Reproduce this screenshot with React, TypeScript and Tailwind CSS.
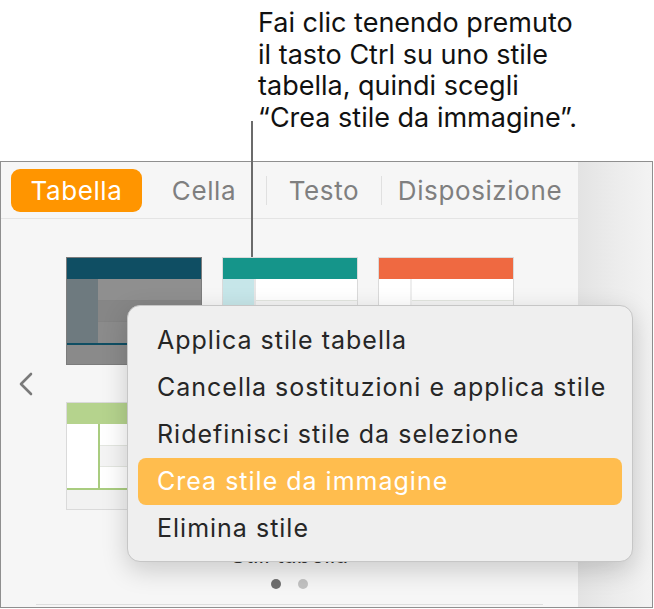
const font = { fontFamily: 'Inter, "Noto Sans", sans-serif' }

const menuItems = [
  'Applica stile tabella',
  'Cancella sostituzioni e applica stile',
  'Ridefinisci stile da selezione',
  'Crea stile da immagine',
  'Elimina stile',
]

function DarkThumb() {
  return (
    <div className="w-[136px] h-[108px] border border-[#7c7c7c] bg-[#8a8a8a] flex flex-col">
      <div className="h-[21px] bg-[#0f4e63]" />
      <div className="flex h-[64px]">
        <div className="w-[31px] bg-[#6e7a7f]" />
        <div className="flex-1 flex flex-col">
          <div className="flex-1 bg-[#8f8f8f] border-b border-[#858585]" />
          <div className="flex-1 bg-[#868686] border-b border-[#838383]" />
          <div className="flex-1 bg-[#8b8b8b]" />
        </div>
      </div>
      <div className="h-[2px] bg-[#0f4e63]" />
      <div className="flex-1 bg-[#8a8a8a]" />
    </div>
  )
}

function LightThumb({ head, col, line }: { head: string; col: string; line: string }) {
  return (
    <div className="w-[136px] h-[108px] border border-[#dadada] bg-white flex flex-col">
      <div className={`h-[21px] ${head}`} />
      <div className="flex h-[64px]">
        <div className={`w-[31px] ${col}`} />
        <div className={`w-[2px] ${line}`} />
        <div className="flex-1 flex flex-col">
          <div className="flex-1 bg-white border-b border-[#e3e6e0]" />
          <div className="flex-1 bg-[#f4f4f4] border-b border-[#e3e6e0]" />
          <div className="flex-1 bg-white" />
        </div>
      </div>
      <div className={`h-[2px] ${line}`} />
      <div className="flex-1 bg-[#f2f2f2]" />
    </div>
  )
}

export default function App() {
  return (
    <div className="w-[654px] h-[609px] bg-white text-[#1d1d1f] overflow-hidden relative" style={font}>
      {/* callout */}
      <div className="h-[161px] pl-[258px] pt-[7px] relative">
        <p className="text-[27px] leading-[31.5px] text-[#111]">
          Fai clic tenendo premuto
          <br />
          il tasto Ctrl su uno stile
          <br />
          tabella, quindi scegli
          <br />
          “Crea stile da immagine”.
        </p>
        <div className="absolute left-[251px] top-[121px] w-[2px] h-[136px] bg-[#6b6b6b] z-10" />
      </div>

      {/* window */}
      <div className="w-[653px] h-[447px] border border-[#8f8f8f] flex">
        <div className="w-[577px] h-full bg-[#f6f6f6] flex flex-col">
          {/* tabs */}
          <div className="h-[57px] border-b border-[#e4e4e4] flex items-start pt-[7px] text-[26px] tracking-[0.6px] text-[#7f7f7f]">
            <div className="ml-[10px] w-[131px] h-[43px] rounded-[9px] bg-[#ff9500] text-white flex items-center justify-center">
              Tabella
            </div>
            <div className="w-[124px] h-[43px] flex items-center justify-center">Cella</div>
            <div className="w-px h-[29px] mt-[7px] bg-[#e0e0e0]" />
            <div className="w-[114px] h-[43px] flex items-center justify-center">Testo</div>
            <div className="w-px h-[29px] mt-[7px] bg-[#e0e0e0]" />
            <div className="flex-1 h-[43px] flex items-center justify-center">Disposizione</div>
          </div>

          {/* styles */}
          <div className="flex-1 relative flex flex-col">
            <div className="flex pt-[38px]">
              <div className="w-[65px] flex items-center pl-[17px]">
                <svg width="16" height="24" viewBox="0 0 16 24">
                  <polyline points="13,2 3,12 13,22" fill="none" stroke="#7a7a7a" strokeWidth="2.6" strokeLinecap="round" strokeLinejoin="round" />
                </svg>
              </div>
              <div className="grid grid-cols-[136px_136px_136px] gap-x-[20px] gap-y-[37px]">
                <DarkThumb />
                <LightThumb head="bg-[#15958a]" col="bg-[#c6e6e9]" line="bg-[#e6e6e6]" />
                <LightThumb head="bg-[#ef6941]" col="bg-white" line="bg-[#eeeeee]" />
                <LightThumb head="bg-[#b5d38d]" col="bg-white" line="bg-[#a9cc7f]" />
                <LightThumb head="bg-[#5a8fd0]" col="bg-[#dce8f6]" line="bg-[#5a8fd0]" />
                <LightThumb head="bg-[#888888]" col="bg-[#eeeeee]" line="bg-[#888888]" />
              </div>
            </div>
            <div className="mt-[32px] h-[26px] text-center text-[23px] leading-[26px] text-[#333]">Stili tabella</div>
            <div className="mt-[11px] flex justify-center gap-[17px]">
              <div className="w-[10px] h-[10px] rounded-full bg-[#6f6f6f]" />
              <div className="w-[10px] h-[10px] rounded-full bg-[#c2c2c2]" />
            </div>
            <div className="mt-[15px] mx-[35px] h-px bg-[#dedede]" />

            {/* context menu */}
            <div className="absolute left-[126px] top-[86px] w-[506px] h-[257px] rounded-[13px] bg-[#efefef] border border-[#c6c6c6] shadow-[0_8px_26px_rgba(0,0,0,0.18)] pt-[11px] px-[10px] text-[25px] tracking-[1px] text-[#262626]">
              {menuItems.map((item, i) => (
                <div
                  key={item}
                  className={`h-[47px] flex items-center pl-[19px] rounded-[8px] ${
                    i === 3 ? 'bg-[#ffbd4e] text-white' : ''
                  }`}
                >
                  {item}
                </div>
              ))}
            </div>
          </div>
        </div>
        <div className="flex-1 h-full bg-gradient-to-r from-[#e3e3e3] via-[#ececec] to-[#f3f3f3]" />
      </div>
    </div>
  )
}
